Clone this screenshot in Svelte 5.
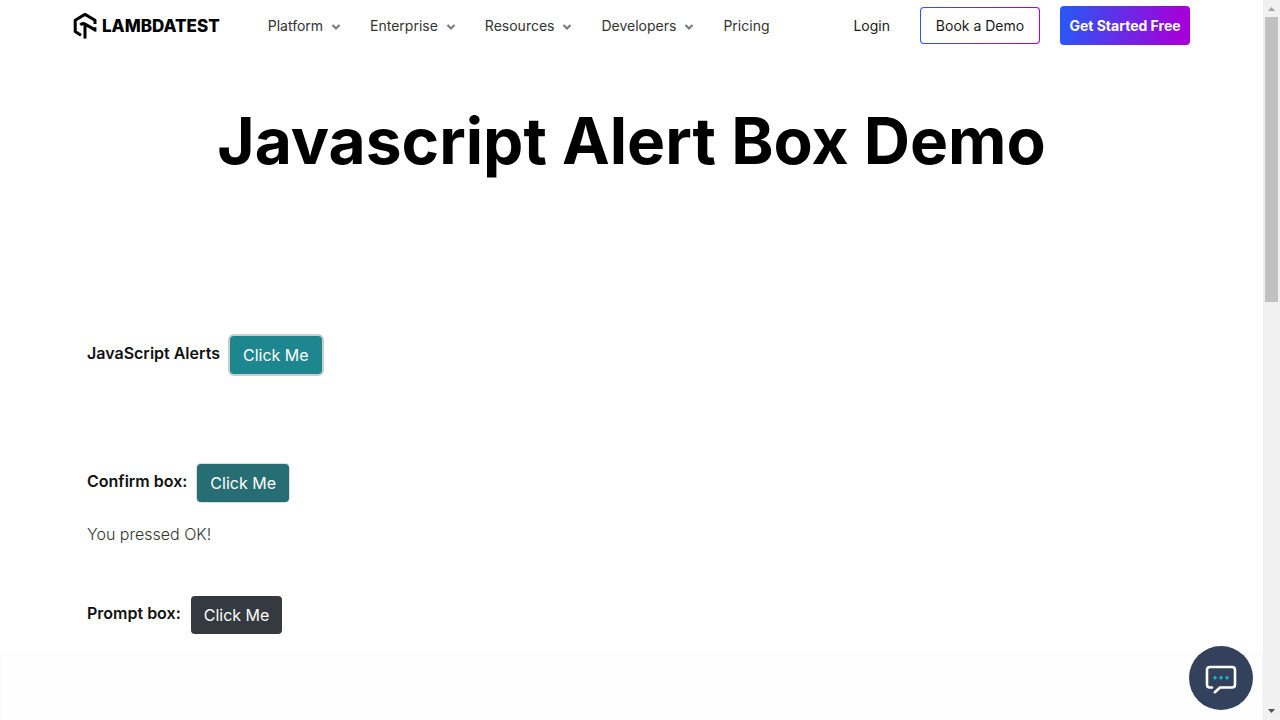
<script>
  const menus = [
    { label: 'Platform', drop: true },
    { label: 'Enterprise', drop: true },
    { label: 'Resources', drop: true },
    { label: 'Developers', drop: true },
    { label: 'Pricing', drop: false }
  ];
  let confirmed = $state('You pressed OK!');
  let prompted = $state('');

  function showConfirm() {
    confirmed = confirm('Press a button!') ? 'You pressed OK!' : 'You pressed Cancel!';
  }
  function showPrompt() {
    prompted = prompt('Please enter your name') ?? '';
  }
</script>

<div class="shell">
  <div class="page">
    <header>
      <a class="logo" href="#home" aria-label="LambdaTest home">
        <svg width="24" height="28" viewBox="0 0 24 28" fill="none" stroke="#000" stroke-width="3" stroke-linejoin="round" aria-hidden="true">
          <path d="M8 23.2 L2.2 19.6 V8.2 L12 2.4 L22 8.2 V12" />
          <path d="M7.4 13 Q9.4 10.8 12 12.2 L21.6 17.6" stroke-width="3.2" />
          <path d="M12 12 V26.6" />
          <path d="M22.2 15.2 V19.6" stroke-width="2.4" />
        </svg>
        <span>LAMBDATEST</span>
      </a>
      <nav>
        {#each menus as item}
          <a href="#{item.label.toLowerCase()}">
            {item.label}
            {#if item.drop}
              <svg width="10" height="8" viewBox="0 0 10 8" fill="none" stroke="#7b7b7b" stroke-width="2.2" aria-hidden="true">
                <path d="M1.5 2 L5 5.5 L8.5 2" />
              </svg>
            {/if}
          </a>
        {/each}
      </nav>
      <div class="actions">
        <a class="login" href="#login">Login</a>
        <button class="book">Book a Demo</button>
        <button class="start">Get Started Free</button>
      </div>
    </header>

    <h1>Javascript Alert Box Demo</h1>

    <main>
      <section>
        <div class="row">
          <strong>JavaScript Alerts</strong>
          <button class="btn alert" onclick={() => alert('I am an alert box!')}>Click Me</button>
        </div>
      </section>
      <section>
        <div class="row">
          <strong>Confirm box:</strong>
          <button class="btn confirm" onclick={showConfirm}>Click Me</button>
        </div>
        <p>{confirmed}</p>
      </section>
      <section>
        <div class="row">
          <strong>Prompt box:</strong>
          <button class="btn prompt" onclick={showPrompt}>Click Me</button>
        </div>
        {#if prompted}<p>{prompted}</p>{/if}
      </section>
    </main>

    <footer></footer>
  </div>

  <div class="scroll" aria-hidden="true">
    <svg width="17" height="17" viewBox="0 0 17 17"><path d="M5 11 H12 L8.5 7 Z" fill="#a3a3a3" /></svg>
    <div class="track"><div class="thumb"></div></div>
    <svg width="17" height="17" viewBox="0 0 17 17"><path d="M5 6 H12 L8.5 10 Z" fill="#505050" /></svg>
  </div>

  <button class="chat" aria-label="Open chat">
    <svg width="32" height="30" viewBox="0 0 32 30" fill="none" aria-hidden="true">
      <path d="M7 22.5 H4.8 Q2 22.5 2 19.5 V5 Q2 2 5 2 H27 Q30 2 30 5 V19.5 Q30 22.5 27 22.5 H15 L9.8 27.2" stroke="#fff" stroke-width="2.6" stroke-linecap="round" stroke-linejoin="round" />
      <circle cx="10" cy="12.7" r="1.7" fill="#0ebac5" />
      <circle cx="16" cy="12.7" r="1.7" fill="#0ebac5" />
      <circle cx="22" cy="12.7" r="1.7" fill="#0ebac5" />
    </svg>
  </button>
</div>

<style>
  :global(body) {
    margin: 0;
    background: #fff;
    font-family: Inter, sans-serif;
  }
  .shell {
    display: flex;
    height: 100vh;
    overflow: hidden;
  }
  .page {
    flex: 1;
    display: flex;
    flex-direction: column;
    min-width: 0;
  }
  button {
    font-family: inherit;
    cursor: pointer;
  }
  a {
    color: inherit;
    text-decoration: none;
  }
  header {
    display: flex;
    align-items: center;
    height: 51px;
    padding: 0 73px;
    font-size: 14px;
    color: #333;
  }
  .logo {
    display: flex;
    align-items: center;
    gap: 5px;
    color: #000;
    font-size: 17px;
    font-weight: 800;
  }
  nav {
    display: flex;
    gap: 29px;
    margin-left: 48px;
  }
  nav a {
    display: flex;
    align-items: center;
    gap: 8px;
  }
  nav svg {
    margin-top: 2px;
  }
  .actions {
    display: flex;
    align-items: center;
    margin-left: auto;
    color: #1a1a1a;
  }
  .book {
    height: 37px;
    width: 120px;
    margin: 0 20px 0 30px;
    padding: 0;
    border: 1px solid transparent;
    border-radius: 4px;
    background: linear-gradient(#fff, #fff) padding-box, linear-gradient(90deg, #2c55fb, #a800d8) border-box;
    color: #1a1a1a;
    font-size: 14px;
  }
  .start {
    height: 39px;
    width: 130px;
    padding: 0;
    border: 0;
    border-radius: 4px;
    background: linear-gradient(98deg, #2c55f5 5%, #a400d8 92%);
    color: #fff;
    font-size: 14px;
    font-weight: 700;
  }
  h1 {
    margin: 51px 0 0;
    color: #000;
    font-size: 64px;
    line-height: 78px;
    font-weight: 700;
    text-align: center;
  }
  main {
    padding: 156px 87px 0;
    font-size: 16px;
    line-height: 24px;
  }
  section + section {
    margin-top: 90px;
  }
  section:last-child {
    margin-top: 50px;
  }
  .row {
    display: flex;
    gap: 10px;
  }
  strong {
    padding-top: 5px;
    color: #111;
    font-weight: 600;
  }
  .btn {
    height: 38px;
    padding: 0 13px;
    border: 0;
    border-radius: 4px;
    color: #fff;
    font-size: 16px;
  }
  .alert {
    background: #1e868f;
    box-shadow: 0 0 0 2px #ccc;
  }
  .confirm {
    background: #266d74;
    box-shadow: 0 0 0 1px #ddd;
  }
  .prompt {
    background: #343a40;
  }
  p {
    margin: 20px 0 0;
    color: #333;
    font-weight: 300;
  }
  footer {
    flex: 1;
    margin-top: 20px;
    border: solid #f8f8f8;
    border-width: 1px 1px 0;
    background: #fefefe;
  }
  .scroll {
    display: flex;
    flex-direction: column;
    width: 17px;
    background: #f1f1f1;
  }
  .track {
    flex: 1;
    padding: 0 2px;
  }
  .thumb {
    height: 41.5%;
    background: #c1c1c1;
  }
  .chat {
    position: fixed;
    right: 27px;
    bottom: 10px;
    display: grid;
    place-items: center;
    width: 64px;
    height: 64px;
    padding: 4px 0 0;
    border: 0;
    border-radius: 50%;
    background: #33415c;
  }
</style>
